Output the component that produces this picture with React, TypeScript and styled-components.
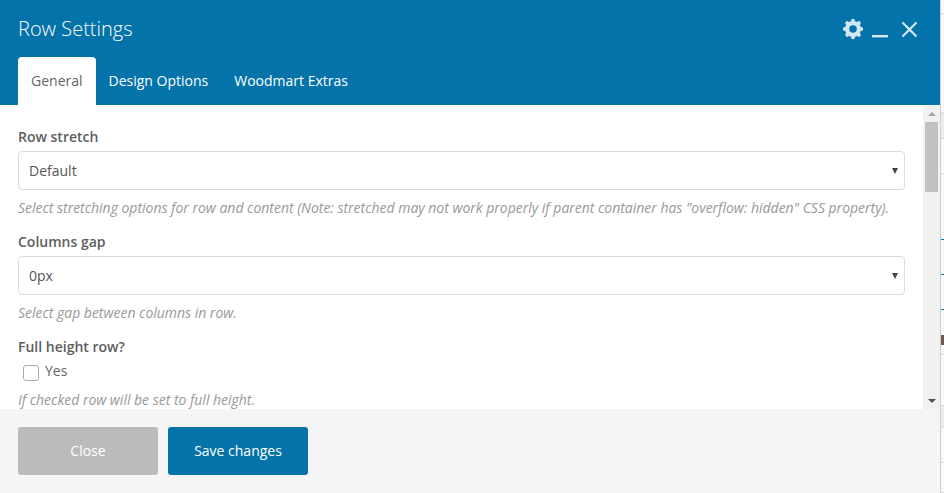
import { createGlobalStyle, styled } from "styled-components";

const GlobalStyle = createGlobalStyle`
  html, body {
    margin: 0;
    padding: 0;
    width: 944px;
    height: 493px;
    overflow: hidden;
    background: #fff;
  }
  * {
    box-sizing: border-box;
  }
`;

const Page = styled.div`
  display: flex;
  width: 944px;
  height: 493px;
  font-family: "Open Sans", sans-serif;
`;

const Modal = styled.div`
  display: flex;
  flex-direction: column;
  flex-shrink: 0;
  width: 940px;
  height: 493px;
  background: #fff;
`;

const Header = styled.div`
  display: flex;
  flex-direction: column;
  justify-content: space-between;
  height: 105px;
  padding: 16px 0 0 18px;
  background: #0473aa;
`;

const TitleRow = styled.div`
  display: flex;
  align-items: flex-start;
  justify-content: space-between;
  padding-right: 22px;
`;

const Title = styled.div`
  color: #fff;
  font-size: 20px;
  font-weight: 300;
  line-height: 26px;
`;

const Controls = styled.div`
  display: flex;
  align-items: center;
  gap: 8px;
  color: #d3e8f2;
  padding-top: 2px;
`;

const CloseGlyph = styled.svg`
  margin-left: 5px;
`;

const Tabs = styled.div`
  display: flex;
`;

const Tab = styled.div<{ $active?: boolean }>`
  height: 48px;
  padding: 0 13px;
  border-radius: 4px 4px 0 0;
  background: ${(p) => (p.$active ? "#fff" : "transparent")};
  color: ${(p) => (p.$active ? "#666" : "#fff")};
  font-size: 14px;
  line-height: 48px;
`;

const Middle = styled.div`
  display: flex;
  flex: 1;
  min-height: 0;
`;

const Body = styled.div`
  flex: 1;
  min-width: 0;
  padding: 22px 18px 0;
  overflow: hidden;
`;

const Field = styled.div`
  margin-bottom: 15px;
`;

const Label = styled.div`
  color: #5e5e5e;
  font-size: 14px;
  font-weight: 600;
  line-height: 19px;
  margin-bottom: 5px;
`;

const SelectBox = styled.div`
  display: flex;
  align-items: center;
  justify-content: space-between;
  height: 39px;
  padding: 0 6px 0 10px;
  border: 1px solid #dcdcdc;
  border-radius: 4px;
  color: #555;
  font-size: 14px;
`;

const Caret = styled.span`
  width: 0;
  height: 0;
  border-left: 3px solid transparent;
  border-right: 3px solid transparent;
  border-top: 6px solid #444;
`;

const Hint = styled.div`
  margin-top: 8px;
  color: #999;
  font-size: 14px;
  font-style: italic;
  line-height: 19px;
  letter-spacing: -0.017px;
  white-space: nowrap;
`;

const CheckRow = styled.label`
  display: flex;
  align-items: flex-start;
  gap: 6px;
  height: 21px;
  padding-left: 5px;
  color: #666;
  font-size: 14px;
  line-height: 19px;
`;

const CheckBox = styled.span`
  width: 16px;
  height: 16px;
  margin-top: 4px;
  border: 1px solid #aaa;
  border-radius: 3px;
  background: #fff;
`;

const Scrollbar = styled.div`
  display: flex;
  flex-direction: column;
  align-items: center;
  width: 17px;
  background: #f1f1f1;
`;

const ScrollArrow = styled.div`
  display: flex;
  align-items: center;
  justify-content: center;
  height: 17px;
`;

const ArrowUp = styled.span`
  width: 0;
  height: 0;
  border-left: 4px solid transparent;
  border-right: 4px solid transparent;
  border-bottom: 4px solid #a3a3a3;
`;

const ArrowDown = styled.span`
  width: 0;
  height: 0;
  border-left: 4px solid transparent;
  border-right: 4px solid transparent;
  border-top: 4px solid #505050;
`;

const ScrollThumb = styled.div`
  width: 13px;
  height: 70px;
  background: #c1c1c1;
`;

const ScrollSpace = styled.div`
  flex: 1;
`;

const Footer = styled.div`
  display: flex;
  gap: 10px;
  height: 84px;
  padding: 18px 18px 0;
  background: #f5f5f5;
`;

const FooterButton = styled.div<{ $primary?: boolean }>`
  width: 140px;
  height: 48px;
  border-radius: 3px;
  background: ${(p) => (p.$primary ? "#0473aa" : "#bbb")};
  color: #fff;
  font-size: 14px;
  line-height: 48px;
  text-align: center;
`;

/* the page behind the modal, only a sliver of it shows at the right edge */
const Backdrop = styled.div`
  display: flex;
  flex-direction: column;
  flex: 1;
  overflow: hidden;
  border-left: 1px solid #cfcfcf;
  background: #fff;
`;

const Band = styled.div<{ $height: number; $grey?: boolean }>`
  flex-shrink: 0;
  height: ${(p) => p.$height}px;
  border-bottom: 1px solid #dcdcdc;
  background: ${(p) => (p.$grey ? "#ececec" : "#f9f9f9")};
`;

const LinkBand = styled.div`
  display: flex;
  flex-direction: column;
  flex-shrink: 0;
  height: 181px;
  padding-top: 56px;
  gap: 25px;
  border-bottom: 1px solid #dcdcdc;
  background: #f9f9f9;
`;

const LinkStub = styled.span<{ $dark?: boolean }>`
  width: 3px;
  height: 10px;
  background: ${(p) => (p.$dark ? "#6b5a50" : "transparent")};
  border-bottom: 1px solid ${(p) => (p.$dark ? "transparent" : "#0473aa")};
`;

const GearIcon = () => (
  <svg width="22" height="22" viewBox="0 0 24 24" fill="currentColor">
    <circle cx="12" cy="12" r="6.4" fill="none" stroke="currentColor" strokeWidth="4.6" />
    {[0, 45, 90, 135, 180, 225, 270, 315].map((angle) => (
      <circle key={angle} cx="12" cy="3" r="2.1" transform={`rotate(${angle} 12 12)`} />
    ))}
  </svg>
);

const MinimizeIcon = () => (
  <svg width="16" height="20" viewBox="0 0 16 20" fill="currentColor">
    <rect x="0" y="16" width="16" height="2.4" />
  </svg>
);

const CloseIcon = () => (
  <CloseGlyph width="17" height="17" viewBox="0 0 17 17" stroke="currentColor" strokeWidth="2.2" fill="none">
    <path d="M1.5 1.5l14 14M15.5 1.5l-14 14" />
  </CloseGlyph>
);

export default function App() {
  return (
    <Page>
      <GlobalStyle />
      <Modal>
        <Header>
          <TitleRow>
            <Title>Row Settings</Title>
            <Controls>
              <GearIcon />
              <MinimizeIcon />
              <CloseIcon />
            </Controls>
          </TitleRow>
          <Tabs>
            <Tab $active>General</Tab>
            <Tab>Design Options</Tab>
            <Tab>Woodmart Extras</Tab>
          </Tabs>
        </Header>
        <Middle>
          <Body>
            <Field>
              <Label>Row stretch</Label>
              <SelectBox>
                Default
                <Caret />
              </SelectBox>
              <Hint>
                Select stretching options for row and content (Note: stretched may not work properly if parent
                container has "overflow: hidden" CSS property).
              </Hint>
            </Field>
            <Field>
              <Label>Columns gap</Label>
              <SelectBox>
                0px
                <Caret />
              </SelectBox>
              <Hint>Select gap between columns in row.</Hint>
            </Field>
            <Field>
              <Label>Full height row?</Label>
              <CheckRow>
                <CheckBox />
                Yes
              </CheckRow>
              <Hint>If checked row will be set to full height.</Hint>
            </Field>
          </Body>
          <Scrollbar>
            <ScrollArrow>
              <ArrowUp />
            </ScrollArrow>
            <ScrollThumb />
            <ScrollSpace />
            <ScrollArrow>
              <ArrowDown />
            </ScrollArrow>
          </Scrollbar>
        </Middle>
        <Footer>
          <FooterButton>Close</FooterButton>
          <FooterButton $primary>Save changes</FooterButton>
        </Footer>
      </Modal>
      <Backdrop>
        <Band $height={14} />
        <Band $height={99} />
        <Band $height={26} $grey />
        <Band $height={35} />
        <LinkBand>
          <LinkStub />
          <LinkStub />
          <LinkStub />
          <LinkStub $dark />
        </LinkBand>
        <Band $height={51} />
        <Band $height={22} $grey />
        <Band $height={35} />
        <Band $height={30} />
      </Backdrop>
    </Page>
  );
}
